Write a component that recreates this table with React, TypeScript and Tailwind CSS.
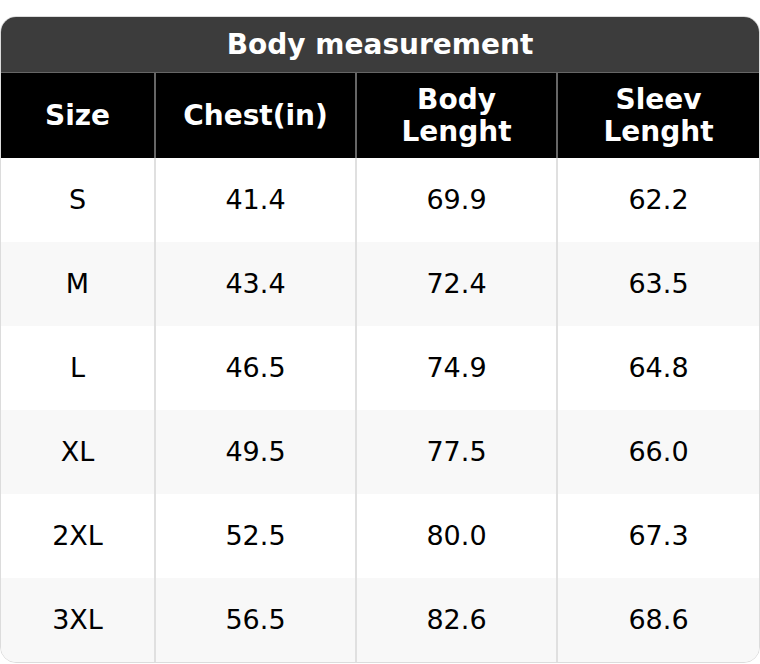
const rows = [
  ["S", "41.4", "69.9", "62.2"],
  ["M", "43.4", "72.4", "63.5"],
  ["L", "46.5", "74.9", "64.8"],
  ["XL", "49.5", "77.5", "66.0"],
  ["2XL", "52.5", "80.0", "67.3"],
  ["3XL", "56.5", "82.6", "68.6"],
];

const headers = [["Size"], ["Chest(in)"], ["Body", "Lenght"], ["Sleev", "Lenght"]];

export default function App() {
  return (
    <div className="bg-white pt-4" style={{ fontFamily: '"DejaVu Sans", sans-serif' }}>
      <div className="overflow-hidden rounded-2xl border border-[#dcdcdc] text-[27px] leading-[32px]">
        <div className="flex h-[55px] items-center justify-center bg-[#3c3c3c] text-[28px] font-bold text-white">
          Body measurement
        </div>
        <div className="grid grid-cols-[155px_201px_201px_1fr] border-t border-[#666] bg-black text-[28px] font-bold text-white">
          {headers.map((h, i) => (
            <div
              key={i}
              className={
                "flex h-[85px] flex-col items-center justify-center " +
                (i < 3 ? "border-r-2 border-[#666]" : "")
              }
            >
              {h.map((line) => (
                <span key={line}>{line}</span>
              ))}
            </div>
          ))}
        </div>
        {rows.map((r, ri) => (
          <div
            key={r[0]}
            className={
              "grid grid-cols-[155px_201px_201px_1fr] text-black " +
              (ri % 2 === 1 ? "bg-[#f8f8f8]" : "bg-white")
            }
          >
            {r.map((c, i) => (
              <div
                key={i}
                className={
                  "flex h-[84px] items-center justify-center " +
                  (i < 3 ? "border-r-2 border-[#e0e0e0]" : "")
                }
              >
                {c}
              </div>
            ))}
          </div>
        ))}
      </div>
    </div>
  );
}
